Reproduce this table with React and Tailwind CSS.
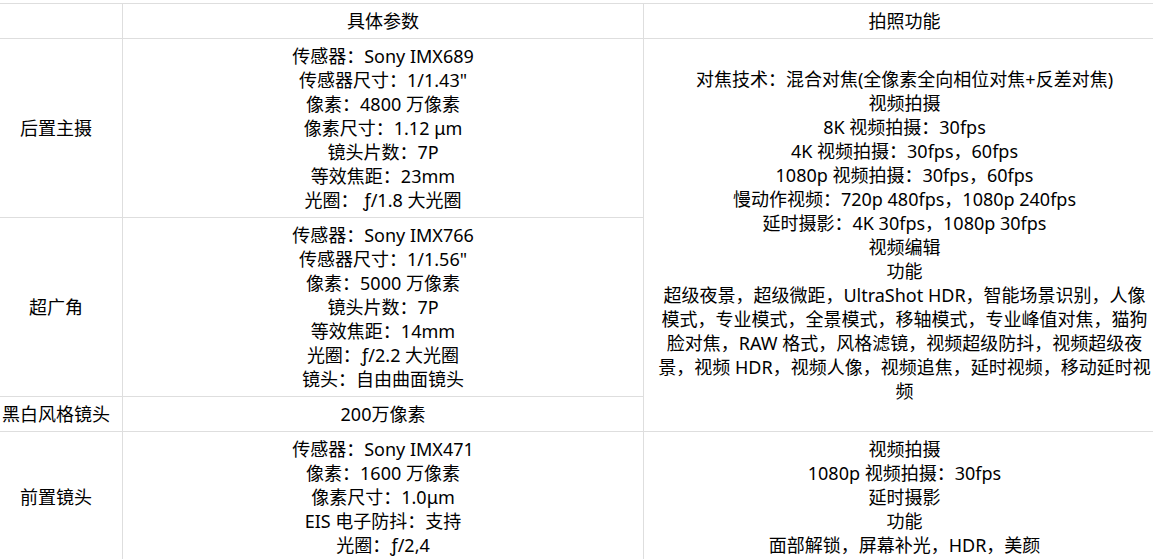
import React from "react";

const font = { fontFamily: '"Noto Sans", "Noto Sans CJK SC", sans-serif' };

function Lines({ items }) {
  return (
    <>
      {items.map((t, i) => (
        <div key={i} className="whitespace-nowrap">
          {t}
        </div>
      ))}
    </>
  );
}

const td = "border border-[#dedede] px-2 py-[5px] text-center align-middle";

export default function App() {
  return (
    <div
      className="w-[1153px] h-[559px] overflow-hidden bg-white pt-[3px] text-[18px] leading-[24px] text-black"
      style={font}
    >
      <table className="table-fixed border-collapse w-[1176px] -ml-[11px]">
        <colgroup>
          <col className="w-[133px]" />
          <col className="w-[521px]" />
          <col className="w-[522px]" />
        </colgroup>
        <tbody>
          <tr>
            <td className={td}></td>
            <td className={td}>具体参数</td>
            <td className={td}>拍照功能</td>
          </tr>
          <tr>
            <td className={td}>后置主摄</td>
            <td className={td}>
              <Lines
                items={[
                  "传感器：Sony IMX689",
                  "传感器尺寸：1/1.43\"",
                  "像素：4800 万像素",
                  "像素尺寸：1.12 μm",
                  "镜头片数：7P",
                  "等效焦距：23mm",
                  "光圈： ƒ/1.8 大光圈",
                ]}
              />
            </td>
            <td className={td} rowSpan={3}>
              <Lines
                items={[
                  "对焦技术：混合对焦(全像素全向相位对焦+反差对焦)",
                  "视频拍摄",
                  "8K 视频拍摄：30fps",
                  "4K 视频拍摄：30fps，60fps",
                  "1080p 视频拍摄：30fps，60fps",
                  "慢动作视频：720p 480fps，1080p 240fps",
                  "延时摄影：4K 30fps，1080p 30fps",
                  "视频编辑",
                  "功能",
                  "超级夜景，超级微距，UltraShot HDR，智能场景识别，人像",
                  "模式，专业模式，全景模式，移轴模式，专业峰值对焦，猫狗",
                  "脸对焦，RAW 格式，风格滤镜，视频超级防抖，视频超级夜",
                  "景，视频 HDR，视频人像，视频追焦，延时视频，移动延时视",
                  "频",
                ]}
              />
            </td>
          </tr>
          <tr>
            <td className={td}>超广角</td>
            <td className={td}>
              <Lines
                items={[
                  "传感器：Sony IMX766",
                  "传感器尺寸：1/1.56\"",
                  "像素：5000 万像素",
                  "镜头片数：7P",
                  "等效焦距：14mm",
                  "光圈：ƒ/2.2 大光圈",
                  "镜头：自由曲面镜头",
                ]}
              />
            </td>
          </tr>
          <tr>
            <td className={td}>黑白风格镜头</td>
            <td className={td}>200万像素</td>
          </tr>
          <tr>
            <td className={td}>前置镜头</td>
            <td className={td}>
              <Lines
                items={[
                  "传感器：Sony IMX471",
                  "像素：1600 万像素",
                  "像素尺寸：1.0μm",
                  "EIS 电子防抖：支持",
                  "光圈：ƒ/2,4",
                ]}
              />
            </td>
            <td className={td}>
              <Lines
                items={[
                  "视频拍摄",
                  "1080p 视频拍摄：30fps",
                  "延时摄影",
                  "功能",
                  "面部解锁，屏幕补光，HDR，美颜",
                ]}
              />
            </td>
          </tr>
        </tbody>
      </table>
    </div>
  );
}
